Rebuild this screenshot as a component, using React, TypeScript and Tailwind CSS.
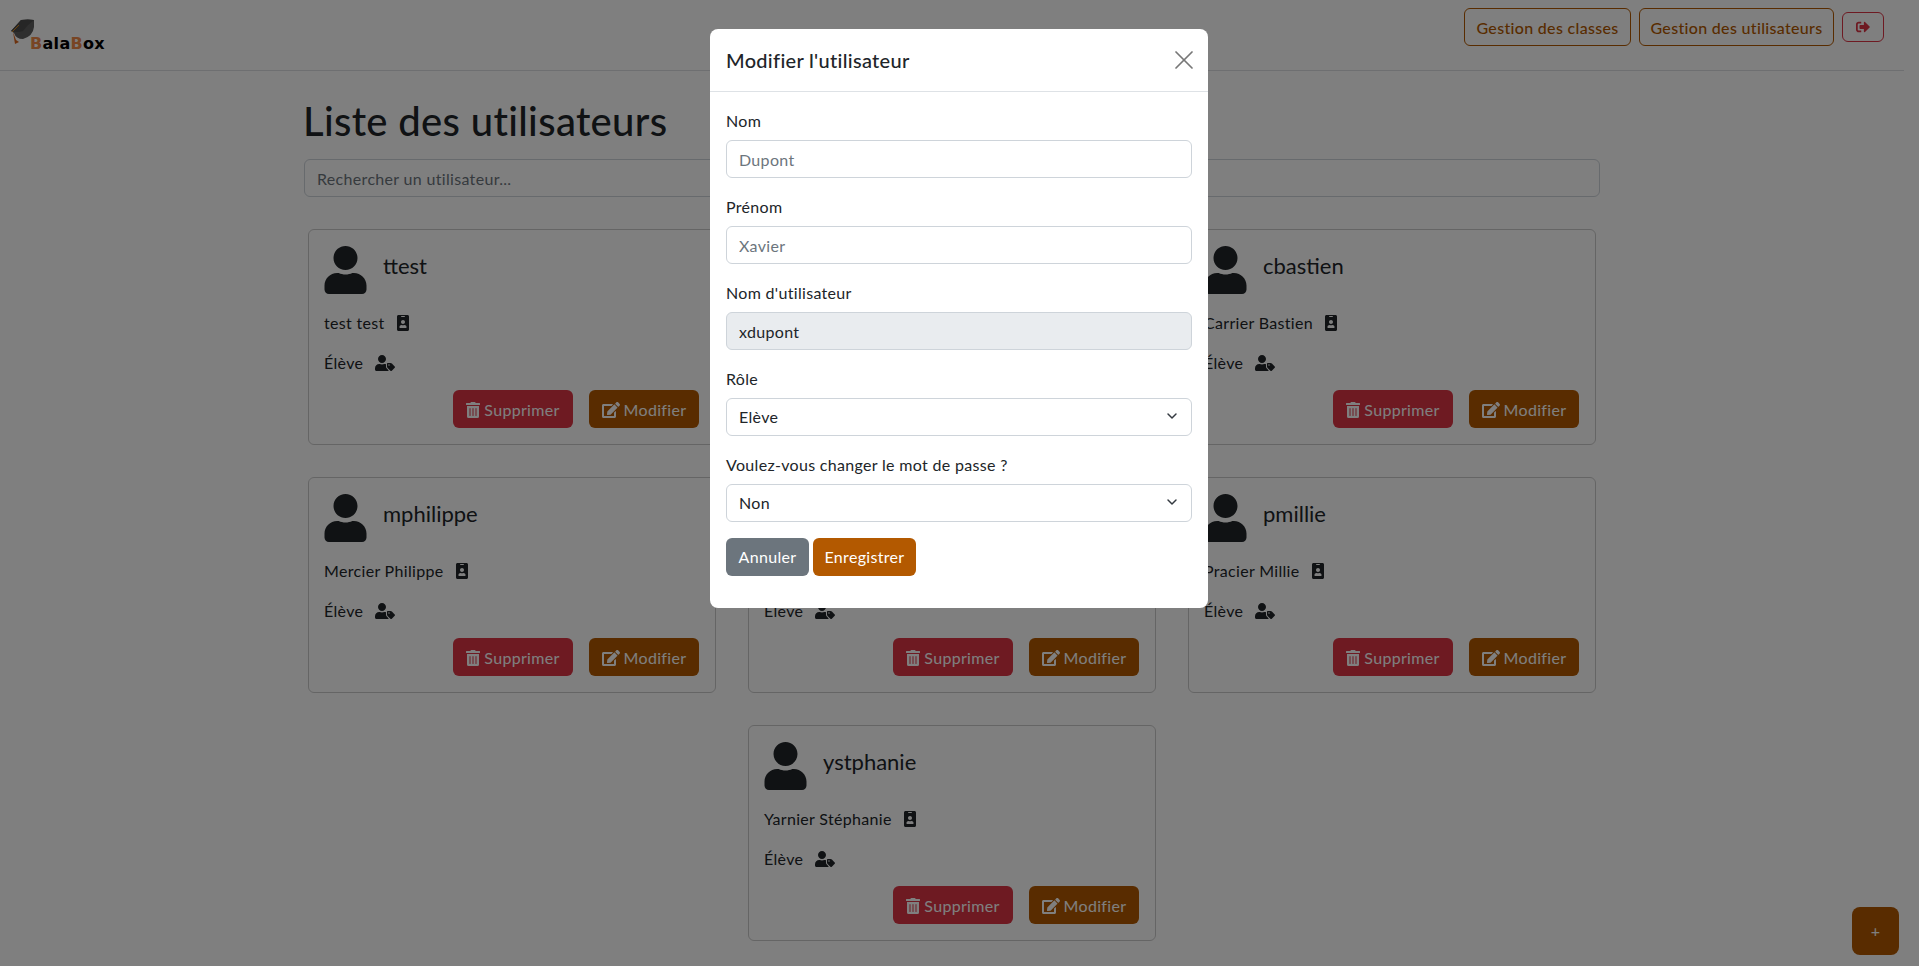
import { FaEdit, FaIdBadge, FaSignOutAlt, FaTrashAlt, FaUser, FaUserTag } from "react-icons/fa";
import { ChevronDown, X } from "lucide-react";

const users = [
  { login: "ttest", name: "test test" },
  { login: "", name: "" },
  { login: "cbastien", name: "Carrier Bastien" },
  { login: "mphilippe", name: "Mercier Philippe" },
  { login: "", name: "" },
  { login: "pmillie", name: "Pracier Millie" },
  { login: "ystphanie", name: "Yarnier Stéphanie" },
];

function Logo() {
  return (
    <div className="relative h-[70px] w-[110px]">
      <svg className="absolute left-[10px] top-[18px]" width="26" height="28" viewBox="0 0 26 28">
        <path d="M1 13 L11 2 Q18 1 24 2 L24 9 Q23 18 13 21 Q6 21 4 15 Z" fill="#5e5e5e" />
        <path d="M1 13 L11 2 Q18 1 24 2 Q17 7 13 13 Q7 15 1 13 Z" fill="#4c4c4c" />
        <path d="M2 14 L9 7" stroke="#d98a1f" strokeWidth="1" fill="none" />
        <path d="M3 14 L6 22 L9 24 L5 26 Z" fill="#d9661f" />
      </svg>
      <span className="absolute left-[30px] top-[34px] font-['DejaVu_Sans',sans-serif] text-[16px] leading-[20px] font-bold tracking-[0.3px] text-black">
        <span className="text-[#f08a48]">B</span>ala<span className="text-[#f08a48]">B</span>ox
      </span>
    </div>
  );
}

function UserCard({ login, name }: { login: string; name: string }) {
  return (
    <div className="flex h-[216px] w-[408px] flex-col rounded-md border border-[#cbcbcb] py-4 pr-4 pl-[15px]">
      <div className="flex h-[48px] items-center">
        <FaUser className="h-12 w-[43px] text-[#212529]" />
        <span className="mb-[9px] ml-4 text-[22px] tracking-normal text-[#212529]">{login}</span>
      </div>
      <div className="mt-[17px] flex h-6 items-center gap-3">
        <span>{name}</span>
        <FaIdBadge className="h-4 w-3" />
      </div>
      <div className="mt-4 flex h-6 items-center gap-3">
        <span>Élève</span>
        <FaUserTag className="h-4 w-5" />
      </div>
      <div className="mt-auto flex justify-end gap-4">
        <button className="flex h-[38px] w-[120px] items-center justify-center gap-1 rounded-md bg-[#dc3545] pt-px text-white">
          <FaTrashAlt className="h-4 w-[14px]" />
          Supprimer
        </button>
        <button className="flex h-[38px] w-[110px] items-center justify-center gap-1 rounded-md bg-[#b35900] pt-px text-white">
          <FaEdit className="h-4 w-[18px]" />
          Modifier
        </button>
      </div>
    </div>
  );
}

function Field({ label, children }: { label: string; children: React.ReactNode }) {
  return (
    <div className="mb-4">
      <label className="mb-2 block h-6 leading-[26px]">{label}</label>
      {children}
    </div>
  );
}

function SelectField({ label, value, options }: { label: string; value: string; options: string[] }) {
  return (
    <Field label={label}>
      <div className="relative">
        <select
          defaultValue={value}
          className="block h-[38px] w-full appearance-none rounded-md border border-[#ced4da] bg-white px-3 text-[#212529]"
        >
          {options.map((o) => (
            <option key={o}>{o}</option>
          ))}
        </select>
        <ChevronDown className="pointer-events-none absolute right-3 top-[10px] h-4 w-4 text-[#343a40]" strokeWidth={2.2} />
      </div>
    </Field>
  );
}

export default function App() {
  return (
    <div className="relative h-[966px] overflow-hidden bg-white font-[Lato,sans-serif] tracking-[0.02em] text-[#212529]">
      <div className="h-full w-[1904px]">
        {/* Navbar */}
        <nav className="flex h-[71px] items-start justify-between border-b border-[#dddfe2] pr-5">
          <Logo />
          <div className="mt-2 flex items-start gap-2">
            <button className="h-[38px] w-[167px] rounded-md border border-[#b35900] pt-px font-medium text-[#b35900]">Gestion des classes</button>
            <button className="h-[38px] w-[195px] rounded-md border border-[#b35900] pt-px font-medium text-[#b35900]">Gestion des utilisateurs</button>
            <button className="mt-1 flex h-[30px] w-[42px] items-center justify-center rounded-md border border-[#dc3545] text-[#dc3545]">
              <FaSignOutAlt className="h-[14px] w-4" />
            </button>
          </div>
        </nav>

        <main className="mx-auto w-[1320px] px-3">
          <h1 className="mt-[26px] -ml-px h-[48px] text-[40px] leading-[48px] font-medium tracking-[0.008em]">Liste des utilisateurs</h1>
          <input
            placeholder="Rechercher un utilisateur..."
            className="mt-[14px] block h-[38px] w-full rounded-md border border-[#ced4da] px-3 placeholder:text-[#6c757d]"
          />
          <div className="mx-1 mt-8 flex flex-wrap justify-center gap-x-8 gap-y-8">
            {users.map((u, i) => (
              <UserCard key={i} login={u.login} name={u.name} />
            ))}
          </div>
        </main>
      </div>

      <button className="fixed left-[1852px] top-[907px] z-10 h-12 w-[47px] rounded-lg bg-[#b35900] text-white">+</button>

      {/* Backdrop */}
      <div className="fixed inset-0 z-20 bg-black/50" />

      {/* Modal */}
      <div className="fixed left-[710px] top-[29px] z-30 h-[579px] w-[498px] rounded-lg bg-white">
        <div className="flex h-[63px] items-center justify-between border-b border-[#dee2e6] px-4">
          <h5 className="text-xl font-medium tracking-[0.015em]">Modifier l'utilisateur</h5>
          <X className="-mr-2 h-8 w-8 text-[#777777]" strokeWidth={1.3} />
        </div>
        <div className="px-4 pt-4">
          <Field label="Nom">
            <input placeholder="Dupont" className="block h-[38px] w-full rounded-md border border-[#ced4da] px-3 placeholder:text-[#6c757d]" />
          </Field>
          <Field label="Prénom">
            <input placeholder="Xavier" className="block h-[38px] w-full rounded-md border border-[#ced4da] px-3 placeholder:text-[#6c757d]" />
          </Field>
          <Field label="Nom d'utilisateur">
            <input readOnly value="xdupont" className="block h-[38px] w-full rounded-md border border-[#ced4da] bg-[#e9ecef] px-3" />
          </Field>
          <SelectField label="Rôle" value="Elève" options={["Elève", "Professeur"]} />
          <SelectField label="Voulez-vous changer le mot de passe ?" value="Non" options={["Non", "Oui"]} />
          <div className="flex gap-1">
            <button className="h-[38px] w-[83px] rounded-md bg-[#6c757d] text-white">Annuler</button>
            <button className="h-[38px] w-[103px] rounded-md bg-[#b35900] text-white">Enregistrer</button>
          </div>
        </div>
      </div>
    </div>
  );
}
